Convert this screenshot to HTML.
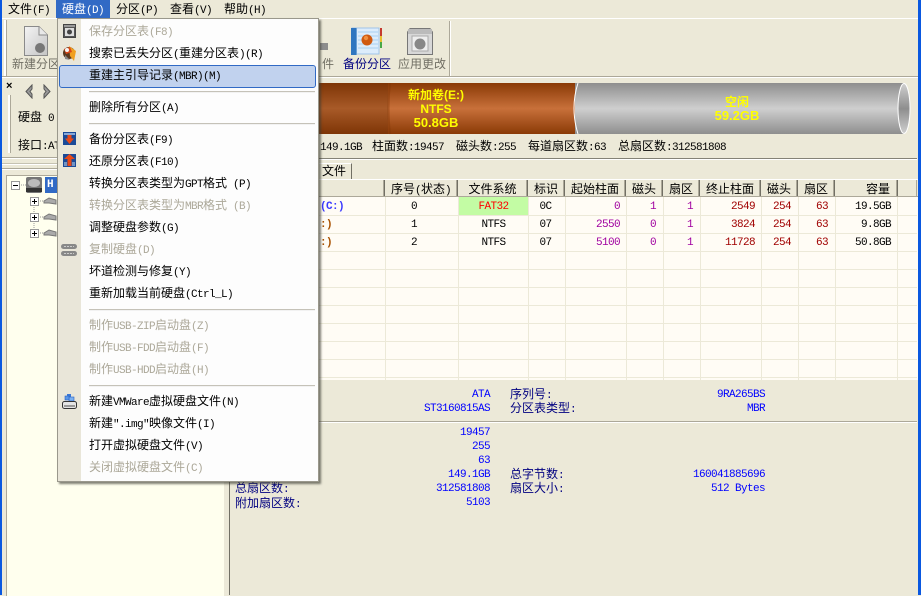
<!DOCTYPE html>
<html><head><meta charset="utf-8"><style>
html,body{margin:0;padding:0}
body{width:921px;height:595px;overflow:hidden;position:relative;background:#ece9d8;font:12px/14px "WenQuanYi Zen Hei","Noto Sans CJK SC",sans-serif;color:#000}
div,svg{position:absolute}
.t{white-space:nowrap}
b{font:11px/14px "Liberation Mono",monospace;letter-spacing:-.6px}
.l{font:11px/14px "Liberation Mono",monospace;letter-spacing:-.6px;white-space:nowrap}
.r{text-align:right;white-space:nowrap}
.c{text-align:center;white-space:nowrap}
.bl{color:#0000ff}
.nv{color:#000080}
.mi{left:32px;white-space:nowrap}
.dis{color:#aca899}
.sp{left:32px;width:226px;height:1px;background:#c5c2b8;border-bottom:1px solid #f2f2f2}
.hc{top:180px;height:16px;line-height:17px;text-align:center;border-right:1px solid #716f64;box-shadow:inset -1px 0 0 #aca899;white-space:nowrap}
.v{top:197px;width:1px;height:183px;background:#ece9d8}
.rw{left:230px;width:687px;height:1px;background:#ece9d8}
.p{color:#a000a0}.d{color:#a00000}
</style></head><body>
<!-- window borders -->
<div style="left:0;top:0;width:2px;height:595px;background:#0a58e0"></div>
<div style="left:918px;top:0;width:3px;height:595px;background:#0a58e0"></div>
<!-- menu bar -->
<div style="left:2px;top:18px;width:916px;height:1px;background:#fff"></div>
<div style="left:56px;top:0;width:54px;height:18px;background:#316ac5"></div>
<div class="t" style="left:8px;top:2px">文件<b>(F)</b></div>
<div class="t" style="left:62px;top:2px;color:#fff">硬盘<b>(D)</b></div>
<div class="t" style="left:116px;top:2px">分区<b>(P)</b></div>
<div class="t" style="left:170px;top:2px">查看<b>(V)</b></div>
<div class="t" style="left:224px;top:2px">帮助<b>(H)</b></div>
<!-- toolbar -->
<div style="left:4px;top:20px;width:2px;height:56px;background:#fff;border-right:1px solid #aca899"></div>
<div style="left:449px;top:21px;width:1px;height:55px;background:#aca899;border-right:1px solid #fff"></div>
<div style="left:2px;top:76px;width:916px;height:1px;background:#aca899"></div>
<div style="left:2px;top:77px;width:916px;height:1px;background:#fff"></div>
<svg style="left:24px;top:26px" width="24" height="30" viewBox="0 0 24 30"><defs><linearGradient id="g1" x1="0" y1="0" x2="1" y2="1"><stop offset="0" stop-color="#f4f4f4"/><stop offset="1" stop-color="#c4c4c4"/></linearGradient></defs><path d="M.5.5H15L23.5 9V29.500H.5Z" fill="url(#g1)" stroke="#8a8a8a"/><path d="M15 .5V9H23.500" fill="#e8e8e8" stroke="#8a8a8a"/><circle cx="16" cy="22" r="5" fill="#777"/></svg>
<div class="t" style="left:12px;top:57px;color:#716f64">新建分区</div>
<div class="t" style="left:322px;top:57px;color:#716f64">件</div>
<div class="t" style="left:343px;top:57px;color:#000080">备份分区</div>
<div class="t" style="left:398px;top:57px;color:#716f64">应用更改</div>
<svg style="left:320px;top:40px" width="8" height="12"><rect y="3" width="8" height="7" fill="#8d8d8d"/></svg>
<svg style="left:351px;top:27px" width="32" height="28" viewBox="0 0 32 28"><rect x="1" y="1" width="27" height="26" fill="#dcecfb" stroke="#9fc4e8"/><path d="M7 5H27M7 9H27M7 13H27M7 17H27M7 21H27" stroke="#a9d0f0"/><rect width="5" height="27" y="1" fill="#2f76c0"/><rect x="5" y="1" width="1" height="27" fill="#6a9fd4"/><path d="M29 1h2v8h-2z" fill="#c43a2f"/><path d="M29 9h2v6h-2z" fill="#e8c030"/><path d="M29 15h2v6h-2z" fill="#48a848"/><circle cx="16" cy="13" r="5.500" fill="#d05a10"/><circle cx="15" cy="11" r="2.200" fill="#f09040"/></svg>
<svg style="left:407px;top:28px" width="26" height="27" viewBox="0 0 26 27"><path d="M3 .5H23L25.500 4V26.500H.5V4Z" fill="#d8d8d8" stroke="#777"/><rect x="1" y="1" width="24" height="5" fill="#bbb"/><rect x="5" y="8" width="16" height="15" fill="#eee" stroke="#aaa"/><circle cx="13" cy="16" r="5.500" fill="#888"/></svg>
<!-- left panel top -->
<div class="t" style="left:6px;top:80px;font:bold 11px/12px 'Liberation Sans',sans-serif">×</div>
<div style="left:8px;top:95px;width:2px;height:58px;background:#fff;border-right:1px solid #aca899"></div>
<svg style="left:23px;top:84px" width="28" height="15"><path d="M9 1 3 7.500 9 14V10L7 7.500 9 5Z" fill="#999" stroke="#555"/><path d="M21 1 27 7.500 21 14V10L23 7.500 21 5Z" fill="#999" stroke="#555"/></svg>
<div class="t" style="left:18px;top:110px">硬盘<b>&nbsp;0</b></div>
<div class="t" style="left:18px;top:138px">接口<b>:AT</b></div>
<div style="left:2px;top:157px;width:228px;height:1px;background:#aca899"></div>
<div style="left:2px;top:158px;width:228px;height:1px;background:#fff"></div>
<div style="left:2px;top:163px;width:228px;height:1px;background:#c5c2b2"></div>
<div style="left:2px;top:164px;width:228px;height:1px;background:#fff"></div>
<div style="left:2px;top:168px;width:228px;height:1px;background:#aca899"></div>
<div style="left:2px;top:169px;width:228px;height:1px;background:#fff"></div>
<!-- tree pane -->
<div style="left:6px;top:175px;width:217px;height:420px;background:#ffffee;border-left:1px solid #aca899;border-top:1px solid #aca899"></div>
<svg style="left:8px;top:175px" width="50" height="68"><path d="M20 10H12M30 26H36M30 42H36M30 58H36M26 22V54" stroke="#999" stroke-dasharray="1 1" fill="none"/><rect x="3.500" y="6.500" width="8" height="8" fill="#fff" stroke="#999"/><path d="M5 10.500H10" stroke="#000"/><g fill="#fff" stroke="#999"><rect x="22.500" y="22.500" width="8" height="8"/><rect x="22.500" y="38.500" width="8" height="8"/><rect x="22.500" y="54.500" width="8" height="8"/></g><path d="M24 26.500H29M26.500 24V29M24 42.500H29M26.500 40V45M24 58.500H29M26.500 56V61" stroke="#000"/><rect x="18" y="2" width="16" height="16" rx="2" fill="#777"/><rect x="18" y="13" width="16" height="4" fill="#333"/><ellipse cx="26" cy="8" rx="6" ry="4" fill="#bbb"/><g fill="#aaa" stroke="#777"><path d="M36 26l5-3 7 2v4l-7-1-5 0Z"/><path d="M36 42l5-3 7 2v4l-7-1-5 0Z"/><path d="M36 58l5-3 7 2v4l-7-1-5 0Z"/></g></svg>
<div style="left:45px;top:177px;width:12px;height:16px;background:#316ac5"></div>
<div class="t" style="left:47px;top:178px;color:#fff;font:bold 11px/14px 'Liberation Mono',monospace">H</div>
<!-- right pane frame -->
<div style="left:229px;top:78px;width:1px;height:517px;background:#716f64"></div>
<!-- disk bar -->
<svg style="left:230px;top:83px" width="688" height="52"><defs><linearGradient id="br" x1="0" y1="0" x2="0" y2="1"><stop offset="0" stop-color="#8a3a06"/><stop offset=".5" stop-color="#c8703a"/><stop offset="1" stop-color="#8a3a06"/></linearGradient><linearGradient id="brd" x1="0" y1="0" x2="0" y2="1"><stop offset="0" stop-color="#7e3506"/><stop offset=".5" stop-color="#a85a28"/><stop offset="1" stop-color="#7e3506"/></linearGradient><linearGradient id="gr" x1="0" y1="0" x2="0" y2="1"><stop offset="0" stop-color="#8e8e8e"/><stop offset=".5" stop-color="#cfcfcf"/><stop offset="1" stop-color="#8e8e8e"/></linearGradient><linearGradient id="gre" x1="0" y1="0" x2="0" y2="1"><stop offset="0" stop-color="#cfcfcf"/><stop offset=".5" stop-color="#8e8e8e"/><stop offset="1" stop-color="#cfcfcf"/></linearGradient></defs><rect x="0" width="165" height="51" fill="url(#brd)"/><rect x="158" width="190" height="51" fill="url(#br)"/><path d="M160 0Q157 25 160 51" fill="none" stroke="#7e3506" stroke-width="2" opacity=".4"/><rect x="345" width="329" height="51" fill="url(#gr)"/><path d="M348 0Q340 25 348 51" fill="none" stroke="#fff"/><ellipse cx="674" cy="25.500" rx="6" ry="25" fill="url(#gre)" stroke="#fff"/></svg>
<div class="c" style="left:386px;top:88px;width:100px;color:#ffff00;font-weight:bold">新加卷<span style="font:bold 12px/14px 'Liberation Sans',sans-serif">(E:)</span></div>
<div class="c" style="left:386px;top:102px;width:100px;color:#ffff00;font:bold 12px/14px 'Liberation Sans',sans-serif">NTFS</div>
<div class="c" style="left:386px;top:116px;width:100px;color:#ffff00;font:bold 13px/14px 'Liberation Sans',sans-serif">50.8GB</div>
<div class="c" style="left:687px;top:95px;width:100px;color:#ffff00;font-weight:bold">空闲</div>
<div class="c" style="left:687px;top:109px;width:100px;color:#ffff00;font:bold 13px/14px 'Liberation Sans',sans-serif">59.2GB</div>
<!-- disk info line -->
<div class="t" style="left:320px;top:139px"><b>149.1GB</b></div>
<div class="t" style="left:372px;top:139px">柱面数<b>:19457</b></div>
<div class="t" style="left:456px;top:139px">磁头数<b>:255</b></div>
<div class="t" style="left:528px;top:139px">每道扇区数<b>:63</b></div>
<div class="t" style="left:618px;top:139px">总扇区数<b>:312581808</b></div>
<div style="left:230px;top:158px;width:687px;height:1px;background:#848276"></div>
<div style="left:230px;top:159px;width:687px;height:1px;background:#fff"></div>
<!-- tabs -->
<div style="left:230px;top:163px;width:121px;height:16px;background:#ece9d8;border-right:1px solid #716f64;border-top:1px solid #fff"></div>
<div class="t" style="left:322px;top:164px">文件</div>
<div style="left:230px;top:179px;width:688px;height:1px;background:#fff"></div>
<!-- table header -->
<div class="hc" style="left:230px;width:154px"></div>
<div class="hc" style="left:385px;width:72px">序号<b>(</b>状态<b>)</b></div>
<div class="hc" style="left:458px;width:69px">文件系统</div>
<div class="hc" style="left:528px;width:36px">标识</div>
<div class="hc" style="left:565px;width:60px">起始柱面</div>
<div class="hc" style="left:626px;width:36px">磁头</div>
<div class="hc" style="left:663px;width:36px">扇区</div>
<div class="hc" style="left:700px;width:60px">终止柱面</div>
<div class="hc" style="left:761px;width:36px">磁头</div>
<div class="hc" style="left:798px;width:36px">扇区</div>
<div class="hc" style="left:835px;width:62px;text-align:right"><span style="padding-right:7px">容量</span></div>
<div class="hc" style="left:898px;width:19px;border-right:0"></div>
<div style="left:230px;top:196px;width:688px;height:1px;background:#aca899"></div>
<!-- table body -->
<div style="left:230px;top:197px;width:688px;height:183px;background:#fffcf5"></div>
<div class="rw" style="top:215px"></div><div class="rw" style="top:233px"></div><div class="rw" style="top:251px"></div><div class="rw" style="top:269px"></div><div class="rw" style="top:287px"></div><div class="rw" style="top:305px"></div><div class="rw" style="top:323px"></div><div class="rw" style="top:341px"></div><div class="rw" style="top:359px"></div><div class="rw" style="top:377px"></div>
<div class="v" style="left:385px"></div><div class="v" style="left:458px"></div><div class="v" style="left:528px"></div><div class="v" style="left:565px"></div><div class="v" style="left:626px"></div><div class="v" style="left:663px"></div><div class="v" style="left:700px"></div><div class="v" style="left:761px"></div><div class="v" style="left:798px"></div><div class="v" style="left:835px"></div><div class="v" style="left:897px"></div>
<div style="left:459px;top:197px;width:69px;height:18px;background:#c3fca4"></div>
<div class="l" style="left:320px;top:200px;color:#3a3aff;font-weight:bold">(C:)</div>
<div class="l" style="left:320px;top:218px;color:#a85000;font-weight:bold">:)</div>
<div class="l" style="left:320px;top:236px;color:#a85000;font-weight:bold">:)</div>
<!-- row 1 -->
<div class="l c" style="left:385px;width:58px;top:200px">0</div>
<div class="l c" style="left:459px;width:41px;top:200px;margin-left:14px;color:#f00">FAT32</div>
<div class="l c" style="left:528px;width:35px;top:200px">0C</div>
<div class="l r p" style="left:565px;width:55px;top:200px">0</div>
<div class="l c p" style="left:626px;width:54px;top:200px">1</div>
<div class="l c p" style="left:663px;width:54px;top:200px">1</div>
<div class="l r d" style="left:700px;width:55px;top:200px">2549</div>
<div class="l c d" style="left:761px;width:42px;top:200px">254</div>
<div class="l c d" style="left:798px;width:48px;top:200px">63</div>
<div class="l r" style="left:835px;width:56px;top:200px">19.5GB</div>
<!-- row 2 -->
<div class="l c" style="left:385px;width:58px;top:218px">1</div>
<div class="l c" style="left:459px;width:69px;top:218px">NTFS</div>
<div class="l c" style="left:528px;width:35px;top:218px">07</div>
<div class="l r p" style="left:565px;width:55px;top:218px">2550</div>
<div class="l c p" style="left:626px;width:54px;top:218px">0</div>
<div class="l c p" style="left:663px;width:54px;top:218px">1</div>
<div class="l r d" style="left:700px;width:55px;top:218px">3824</div>
<div class="l c d" style="left:761px;width:42px;top:218px">254</div>
<div class="l c d" style="left:798px;width:48px;top:218px">63</div>
<div class="l r" style="left:835px;width:56px;top:218px">9.8GB</div>
<!-- row 3 -->
<div class="l c" style="left:385px;width:58px;top:236px">2</div>
<div class="l c" style="left:459px;width:69px;top:236px">NTFS</div>
<div class="l c" style="left:528px;width:35px;top:236px">07</div>
<div class="l r p" style="left:565px;width:55px;top:236px">5100</div>
<div class="l c p" style="left:626px;width:54px;top:236px">0</div>
<div class="l c p" style="left:663px;width:54px;top:236px">1</div>
<div class="l r d" style="left:700px;width:55px;top:236px">11728</div>
<div class="l c d" style="left:761px;width:42px;top:236px">254</div>
<div class="l c d" style="left:798px;width:48px;top:236px">63</div>
<div class="l r" style="left:835px;width:56px;top:236px">50.8GB</div>
<!-- info panel -->
<div class="l r bl" style="left:390px;width:100px;top:388px">ATA</div>
<div class="l r bl" style="left:390px;width:100px;top:402px">ST3160815AS</div>
<div class="t nv" style="left:510px;top:387px">序列号<b>:</b></div>
<div class="t nv" style="left:510px;top:401px">分区表类型<b>:</b></div>
<div class="l r bl" style="left:645px;width:120px;top:388px">9RA265BS</div>
<div class="l r bl" style="left:645px;width:120px;top:402px">MBR</div>
<div style="left:230px;top:421px;width:687px;height:1px;background:#aca899;border-bottom:1px solid #fff"></div>
<div class="l r bl" style="left:390px;width:100px;top:426px">19457</div>
<div class="l r bl" style="left:390px;width:100px;top:440px">255</div>
<div class="l r bl" style="left:390px;width:100px;top:454px">63</div>
<div class="l r bl" style="left:390px;width:100px;top:468px">149.1GB</div>
<div class="l r bl" style="left:390px;width:100px;top:482px">312581808</div>
<div class="l r bl" style="left:390px;width:100px;top:496px">5103</div>
<div class="t nv" style="left:510px;top:467px">总字节数<b>:</b></div>
<div class="t nv" style="left:510px;top:481px">扇区大小<b>:</b></div>
<div class="l r bl" style="left:645px;width:120px;top:468px">160041885696</div>
<div class="l r bl" style="left:645px;width:120px;top:482px">512 Bytes</div>
<div class="t nv" style="left:235px;top:481px">总扇区数<b>:</b></div>
<div class="t nv" style="left:235px;top:496px">附加扇区数<b>:</b></div>
<!-- dropdown menu -->
<div style="left:57px;top:18px;width:260px;height:462px;background:#fdfdfd;border:1px solid #9a988c;box-shadow:2px 2px 2px rgba(60,60,50,.65)">
<div style="left:0;top:0;width:23px;height:462px;background:#e9e6d9"></div>
<div style="left:1px;top:46px;width:255px;height:21px;background:#c1d2ee;border:1px solid #316ac5;border-radius:3px"></div>
<div style="left:-1px;top:-1px;width:260px;height:462px">
<div class="mi dis" style="top:6px">保存分区表<b>(F8)</b></div>
<div class="mi" style="top:28px">搜索已丢失分区<b>(</b>重建分区表<b>)(R)</b></div>
<div class="mi" style="top:50px">重建主引导记录<b>(MBR)(M)</b></div>
<div class="sp" style="top:73px"></div>
<div class="mi" style="top:82px">删除所有分区<b>(A)</b></div>
<div class="sp" style="top:105px"></div>
<div class="mi" style="top:114px">备份分区表<b>(F9)</b></div>
<div class="mi" style="top:136px">还原分区表<b>(F10)</b></div>
<div class="mi" style="top:158px">转换分区表类型为<b>GPT</b>格式<b>&nbsp;(P)</b></div>
<div class="mi dis" style="top:180px">转换分区表类型为<b>MBR</b>格式<b>&nbsp;(B)</b></div>
<div class="mi" style="top:202px">调整硬盘参数<b>(G)</b></div>
<div class="mi dis" style="top:224px">复制硬盘<b>(D)</b></div>
<div class="mi" style="top:246px">坏道检测与修复<b>(Y)</b></div>
<div class="mi" style="top:268px">重新加载当前硬盘<b>(Ctrl_L)</b></div>
<div class="sp" style="top:291px"></div>
<div class="mi dis" style="top:300px">制作<b>USB-ZIP</b>启动盘<b>(Z)</b></div>
<div class="mi dis" style="top:322px">制作<b>USB-FDD</b>启动盘<b>(F)</b></div>
<div class="mi dis" style="top:344px">制作<b>USB-HDD</b>启动盘<b>(H)</b></div>
<div class="sp" style="top:367px"></div>
<div class="mi" style="top:376px">新建<b>VMWare</b>虚拟硬盘文件<b>(N)</b></div>
<div class="mi" style="top:398px">新建<b>".img"</b>映像文件<b>(I)</b></div>
<div class="mi" style="top:420px">打开虚拟硬盘文件<b>(V)</b></div>
<div class="mi dis" style="top:442px">关闭虚拟硬盘文件<b>(C)</b></div>
<!-- menu icons -->
<svg style="left:6px;top:6px" width="13" height="14"><rect width="12" height="13" x=".5" y=".5" fill="#555" stroke="#444"/><rect x="1" y="1" width="11" height="2" fill="#999"/><rect x="2" y="4" width="9" height="8" fill="#ddd"/><circle cx="6.500" cy="8" r="2.500" fill="#444"/></svg>
<svg style="left:5px;top:27px" width="16" height="17"><circle cx="7" cy="8" r="6" fill="#5a3a20"/><path d="M7 1 14 6 12 16 8 11Z" fill="#f0a020"/><path d="M2 4 8 2 10 7 4 9Z" fill="#d84818"/><circle cx="5" cy="5" r="2" fill="#f4f4f4"/><path d="M3 10 8 15 3 14Z" fill="#888"/></svg>
<svg style="left:6px;top:114px" width="13" height="13"><rect width="13" height="13" fill="#1a4a98"/><rect x="1" y="1" width="11" height="2" fill="#88a8d8"/><path d="M4.500 3H8.500V6.500H11L6.500 12 2 6.500H4.500Z" fill="#e84818"/></svg>
<svg style="left:6px;top:136px" width="13" height="13"><rect width="13" height="13" fill="#1a4a98"/><path d="M6.500 0 12 5H8.500V12H4.500V5H1Z" fill="#e84818"/><path d="M1 9H4M9 9H12M1 11H4M9 11H12" stroke="#cde"/></svg>
<svg style="left:4px;top:225px" width="17" height="14"><rect y="1" width="16" height="5" rx="2.500" fill="#888"/><rect y="8" width="16" height="5" rx="2.500" fill="#888"/><path d="M3 3.500H13M3 10.500H13" stroke="#ccc" stroke-dasharray="2 1"/></svg>
<svg style="left:5px;top:375px" width="15" height="17"><rect x="5" y="1" width="4" height="4" fill="#3a78d8"/><rect x="7" y="4" width="5" height="4" fill="#7ab0f0" stroke="#2a60c0" stroke-width=".6"/><rect x="3" y="3" width="4" height="4" fill="#5a98e8" stroke="#2a60c0" stroke-width=".6"/><rect x=".5" y="8.500" width="14" height="7" rx="2" fill="#e4e4e4" stroke="#333"/><rect x="2" y="12" width="11" height="2" fill="#999"/></svg>
</div>
</div>
</body></html>
